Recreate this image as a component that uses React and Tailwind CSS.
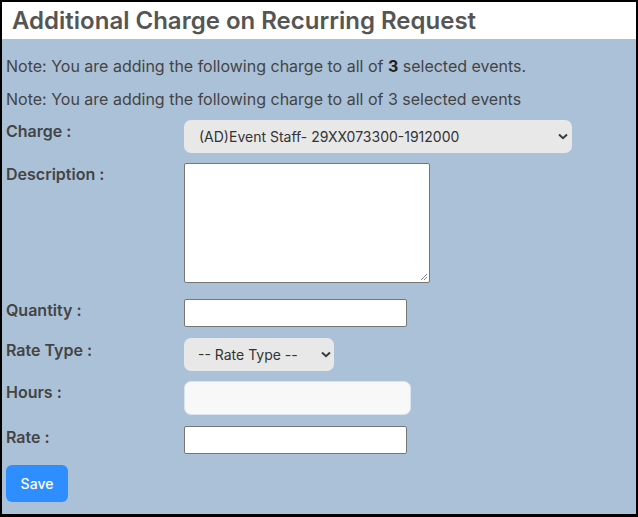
export default function App() {
  const labelCls = "w-[178px] shrink-0 text-[16px] leading-[20px] pt-[1px] font-semibold text-[#444]";
  const chevron = (
    <svg width="10" height="7" viewBox="0 0 10 7">
      <path d="M1 1.5 L5 5.2 L9 1.5" fill="none" stroke="#3a3a3a" strokeWidth="2" />
    </svg>
  );
  return (
    <div className="w-[638px] h-[517px] border-2 border-b-[3px] border-black bg-[#abc1d8] font-['Inter',sans-serif] overflow-hidden">
      <div className="h-[37px] bg-white px-[10px]">
        <h1 className="text-[24px] leading-[37px] font-semibold text-[#555]">Additional Charge on Recurring Request</h1>
      </div>
      <div className="px-[4px] pt-[15px]">
        <p className="text-[16px] leading-[24px] text-[#444]">
          Note: You are adding the following charge to all of <b className="font-bold text-[#222]">3</b> selected events.
        </p>
        <p className="mt-[9px] text-[16px] leading-[24px] text-[#444]">
          Note: You are adding the following charge to all of 3 selected events
        </p>

        <div className="mt-[9px] flex items-start">
          <label className={labelCls}>Charge :</label>
          <div className="w-[388px] h-[33px] rounded-[7px] bg-[#e8e8e8] flex items-center justify-between pl-[15px] pr-[4px] text-[14px] text-[#333]">
            <span>(AD)Event Staff- 29XX073300-1912000</span>
            {chevron}
          </div>
        </div>

        <div className="mt-[10px] flex items-start">
          <label className={labelCls}>Description :</label>
          <div className="relative w-[246px] h-[120px] bg-white border border-[#767676] rounded-[2px]">
            <svg className="absolute right-[1px] bottom-[1px]" width="8" height="8" viewBox="0 0 8 8">
              <path d="M7 1 L1 7 M7 4 L4 7" stroke="#888" strokeWidth="1" />
            </svg>
          </div>
        </div>

        <div className="mt-[16px] flex items-start">
          <label className={labelCls}>Quantity :</label>
          <div className="w-[223px] h-[28px] bg-white border border-[#767676] rounded-[2px]" />
        </div>

        <div className="mt-[11px] flex items-start">
          <label className={`${labelCls} pt-[2px]`}>Rate Type :</label>
          <div className="w-[150px] h-[33px] rounded-[7px] bg-[#e8e8e8] flex items-center justify-between pl-[14px] pr-[3px] text-[14px] text-[#333]">
            <span>-- Rate Type --</span>
            {chevron}
          </div>
        </div>

        <div className="mt-[10px] flex items-start">
          <label className={labelCls}>Hours :</label>
          <div className="w-[227px] h-[34px] rounded-[7px] bg-[#f8f8f8] border border-[#dde3ea]" />
        </div>

        <div className="mt-[11px] flex items-start">
          <label className={labelCls}>Rate :</label>
          <div className="w-[223px] h-[28px] bg-white border border-[#767676] rounded-[2px]" />
        </div>

        <button className="mt-[11px] w-[62px] h-[37px] rounded-[6px] bg-[#2e8eff] text-white text-[14px] font-medium">Save</button>
      </div>
    </div>
  );
}
